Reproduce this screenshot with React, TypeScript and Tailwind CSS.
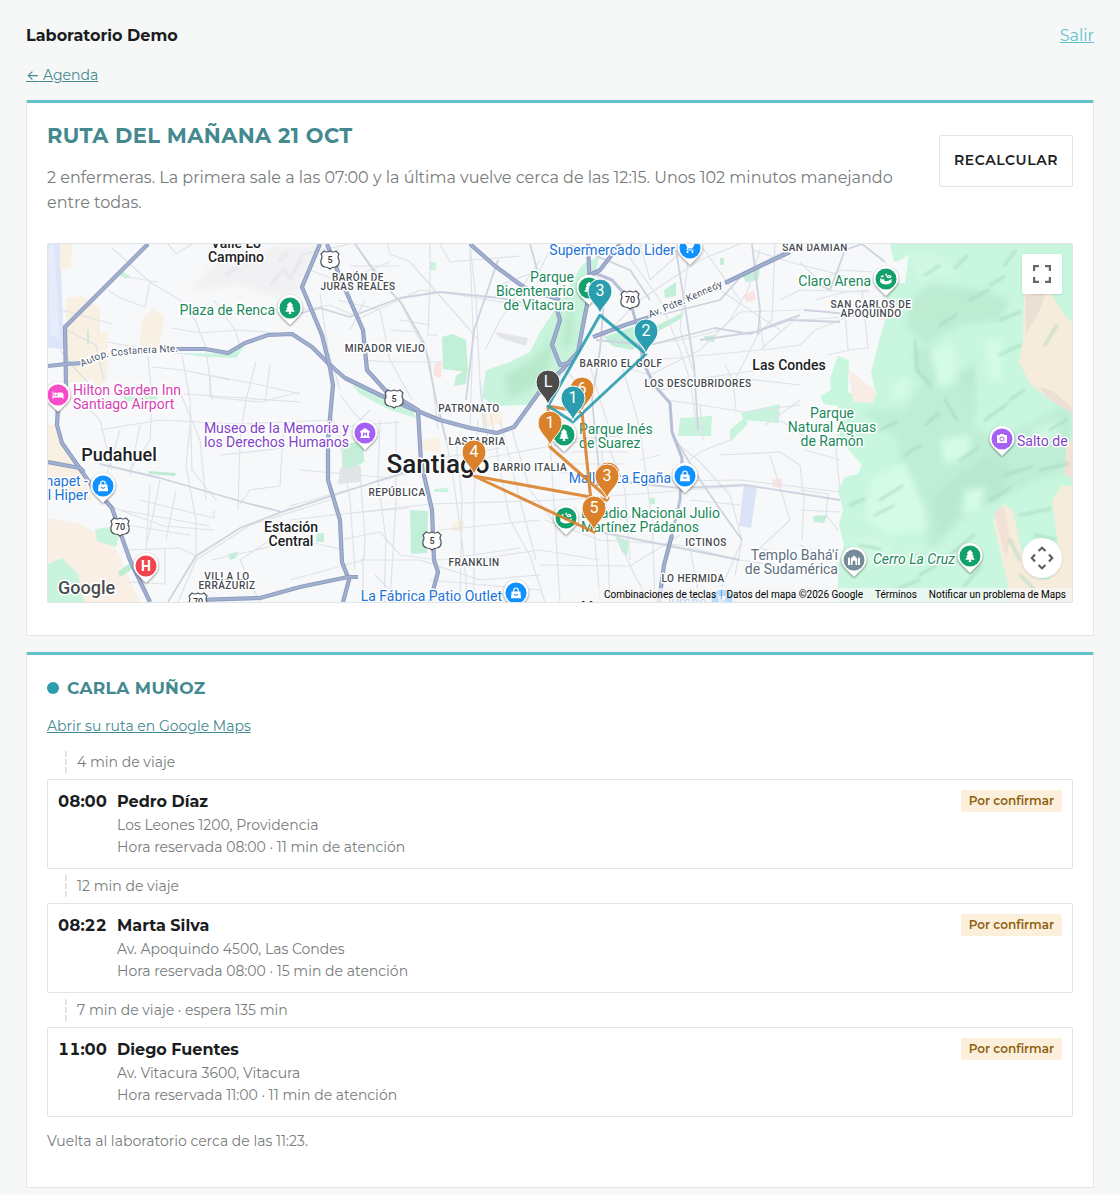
import type { IconType } from "react-icons";
import { FaTree } from "react-icons/fa";
import {
  MdHotel,
  MdMuseum,
  MdPhotoCamera,
  MdShoppingCart,
} from "react-icons/md";

const stops = [
  {
    travel: "4 min de viaje",
    time: "08:00",
    name: "Pedro Díaz",
    address: "Los Leones 1200, Providencia",
    detail: "Hora reservada 08:00 · 11 min de atención",
  },
  {
    travel: "12 min de viaje",
    time: "08:22",
    name: "Marta Silva",
    address: "Av. Apoquindo 4500, Las Condes",
    detail: "Hora reservada 08:00 · 15 min de atención",
  },
  {
    travel: "7 min de viaje · espera 135 min",
    time: "11:00",
    name: "Diego Fuentes",
    address: "Av. Vitacura 3600, Vitacura",
    detail: "Hora reservada 11:00 · 11 min de atención",
  },
];

const areas = [
  { fill: "#dde5f8", d: "M48 244H60L64 349L48 348Z" },
  { fill: "#e6ecfa", d: "M48 250L54 244L60 340L50 335Z" },
  { fill: "#f8f0e2", d: "M60 244H72L71 268L60 270ZM66 298L82 296L100 308V345L86 380L66 384ZM80 345L108 330L106 378L78 380Z" },
  { fill: "#f8f0e2", d: "M141 322L152 309L165 316L158 350L140 346ZM88 364L110 352L106 380L96 392Z" },
  { fill: "#f8f0e2", d: "M48 425H56L72 462L84 476L92 500L64 500L48 480Z" },
  { fill: "#f9efe4", d: "M48 518L80 524L98 534L118 552L134 590L140 602H70L48 560Z" },
  { fill: "#c8f3dc", d: "M48 564L62 558L78 574L84 602H48ZM95 529L110 527L120 532L116 547L97 541Z" },
  { fill: "#bdecd3", d: "M118 572L130 563L134 568L120 577ZM148 471L176 473L175 476L149 474Z" },
  { fill: "#c8f3dc", d: "M120 270L130 276L126 279L119 274ZM176 353L228 354L246 344L236 358L205 357ZM124 396L158 396L156 401H124Z" },
  { fill: "#c2efd7", d: "M442 337L452 334L466 340L468 372L443 369ZM456 376L468 368L466 384L454 386Z" },
  { fill: "#c2efd7", d: "M343 445L363 440L364 462L352 469L342 470ZM410 510L428 511L427 553L411 554ZM317 534L324 533V542H316Z" },
  { fill: "#c8f3dc", d: "M352 385L372 390L412 408L416 418L390 410L360 394ZM434 489L448 488V492H434ZM430 262L436 262V270H430Z" },
  { fill: "#c8f3dc", d: "M540 332L560 302L582 265L600 255L588 300L578 350L555 385L540 395L526 405L495 406L482 397L486 370L510 362L530 352Z" },
  { fill: "#c2efd7", d: "M604 337L632 327L652 328L684 312L682 318L650 336L632 350L612 346ZM664 290L676 282V296L665 298Z" },
  { fill: "#c2efd7", d: "M704 336L716 335L714 342L706 341ZM742 275L760 268L758 280L746 282ZM720 258H724V265H720Z" },
  { fill: "#c8f3dc", d: "M680 418L712 416L711 436H678ZM740 413L780 404L779 423L745 420ZM730 430L744 418L748 424L730 442Z" },
  { fill: "#c2efd7", d: "M615 536L629 541L627 556L622 552ZM650 498H655V504H650ZM813 516L827 515L824 523L814 522ZM228 554L238 552L236 558L230 560Z" },
  { fill: "#dbe3f7", d: "M744 485L757 487L751 528L739 526Z" },
  { fill: "#e2e4e8", d: "M495 332L528 338L526 346L500 338ZM340 468L361 466L360 482L338 484Z" },
  { fill: "#fbe3e1", d: "M744 295L754 290L756 300L746 302ZM772 480L782 478L782 488L773 487ZM434 364L442 361L441 378L434 376Z" },
  { fill: "#faf1e2", d: "M480 415L500 410L504 422L484 428ZM452 522L464 520V532H453ZM420 440L438 438L442 452L422 450Z" },
  { fill: "#c8f6de", d: "M890 244L894 262L901 260L909 254L905 283L887 284L885 320L878 345L871 372L876 396L868 403L848 392L849 360L838 356L830 378L831 390L820 396L824 404L838 406L840 440L862 465L858 474L845 477L838 490L843 510L839 525L844 545L838 565L838 602H1072V244Z" },
];

const softHills = [
  { fill: "#b8e9cc", d: "M505 375L530 362L545 348L556 330L548 372L530 390L508 398ZM565 320L574 300L572 345L562 350Z" },
  { fill: "#bdecd3", d: "M912 300L930 284L985 290L1010 300L1000 320L960 325L925 344L905 325Z" },
  { fill: "#bdecd3", d: "M912 350L935 345L945 365L935 385L918 378ZM950 392L975 360L976 415L955 430Z" },
  { fill: "#bfeed6", d: "M860 410L905 410L925 380L960 390L975 430L1000 440L1072 400V470L1040 478L1000 500L960 520L930 552L918 500L900 480L898 440Z" },
  { fill: "#b9ead1", d: "M930 500L950 480L990 452L1015 470L995 500L962 515L940 540ZM955 375L974 366L976 390Z" },
  { fill: "#d4fbe5", d: "M930 350L952 342L958 372L940 390ZM890 386L910 376L906 398L892 402ZM940 440L970 435L968 455L945 465Z" },
  { fill: "#d4fbe5", d: "M870 480L905 462L925 510L928 530L890 535L865 520ZM965 490L985 488L980 510L962 515ZM984 340L1002 338V380H990Z" },
  { fill: "#d0f8e2", d: "M850 540L880 535L900 560L865 570ZM905 250L940 256L960 275L920 280ZM1030 430L1060 420L1055 445Z" },
];

const hills = [
  { fill: "#f8ede5", d: "M849 370L876 391L873 403L853 402ZM885 290L886 320L878 320Z" },
  { fill: "#f5ecdc", d: "M1024 292L1052 294L1062 312L1072 322V413L1050 400L1030 384L1019 362L1023 340Z" },
  { fill: "#ecdfd3", d: "M1025 296L1046 292L1038 314L1026 333ZM1038 386L1054 392L1072 408V413L1050 400Z" },
  { fill: "#f5ecdc", d: "M1004 504L1013 510L1022 552L1036 578L1050 580L1058 545L1052 500L1062 486H1072V602H1012L1002 560L993 520Z" },
  { fill: "#f2e1d6", d: "M994 512L1004 506L1010 540L1006 560ZM1066 448L1072 440V478L1064 474Z" },
];

const hillShades =
  "M925 275l14-9M955 268l12-12M970 300l18-10M940 325l16-10M990 285l14-8M1005 265l10-14M880 500l22-14M875 515l18-9M905 455l16-10M925 425l14-12M985 420l22-16M1010 400l14-10M1000 355l20-10M960 460l18-12M1005 475l26-8M1040 470l28-6M990 500l20-12M950 555l24-20M920 575l20-12M895 590l24-10M965 585l16-18M1045 345l12-20M1010 540l10 20M1020 575l14 14M880 430l16-8M1020 515l30-6M1035 535l20 4M850 505l14-6M1000 320l20-8M915 340l2 30l14 16M860 545l20 4M945 400l12 20M1050 430l16-10";

const minorRoads = [
  "M112 248L150 282L180 300L196 322L206 348L212 400M150 282L145 307L120 298L108 290M120 276L158 282M168 244L176 254L192 244",
  "M62 310L112 324M66 330L96 345L104 380M108 342L160 352L190 354M148 356L152 400L150 440L130 470M182 355L190 400L192 470L216 500",
  "M172 328L200 333L240 330L292 334M152 367L182 370L256 384L300 394M256 362L246 400L240 440L238 510M192 372L230 380M184 394L300 402",
  "M180 392L200 440L206 500M100 430L160 420L240 424L330 420M210 375V397L260 402L300 392M270 365L265 402M214 300L235 330L240 346",
  "M48 395L80 400L100 420L112 470M120 430L105 480M140 425L130 475M190 425L186 466L196 520L196 560M160 480L148 540M176 490L166 540",
  "M114 508L164 526L214 530M120 510L210 526M124 550L180 548L196 556M126 525L190 535M140 500L214 518V510M150 485L146 550L165 548V584L128 582",
  "M240 504L250 490L280 486L284 420M220 455L285 448M212 560L300 540M178 602L196 560L250 525L330 500M260 602L240 560L300 520",
  "M300 255L350 244M310 270L340 282L390 262M355 244L375 270L400 302L430 360L438 430M388 244L390 254L410 262L470 330L478 340",
  "M302 310L330 305L360 318L420 290L440 292L550 310M320 294L328 350L340 390M338 300L380 310L390 360L412 400M430 244V280L428 335H438M470 250L473 330L470 430",
  "M350 266H400M365 300L350 330M400 320L430 325M390 330L420 332M365 360L390 362H440M340 395L360 420L370 410M470 244L476 300L480 385L484 430",
  "M485 350L500 320L540 260M480 380L488 440M440 244L450 262L520 256M550 250L540 270L500 285",
  "M300 430L400 422M330 415L345 440L360 470L365 540L364 560M338 430L350 500L355 570M300 470L390 478L430 460L500 448",
  "M290 506L340 492L420 470L540 448L600 438M290 520L430 504L560 500L740 486M330 515L410 508M340 540L380 532L400 555L440 560",
  "M380 420L378 480L386 540L384 602M396 420V500L390 602M440 410L452 470L462 540L468 602M456 440L462 500L460 602M478 420L474 500V602",
  "M490 410L500 470L510 520L530 556L545 602M500 420L520 500L536 560M512 430L530 490L560 530M470 560L540 550L600 560M440 530L540 520",
  "M360 560H420L480 580L540 575M290 580L364 560M363 555V602M375 575L390 590M300 540L345 550M430 580L540 590M440 560L520 548",
  "M545 470L580 475L610 482L740 480L840 492M545 520L600 540L680 545L740 560L840 575M540 565L630 566L680 535M550 440L560 602",
  "M580 430L590 480L600 602M600 430L606 500L610 602M560 440L620 436M570 452H628M566 464H624M610 450L625 490L630 560M640 430L652 520L655 602",
  "M615 532L635 576L650 602M690 548L700 602M673 440L700 462L730 495L742 540L735 575M730 440L700 452L690 460M720 455L780 452L800 465L804 500L802 540",
  "M770 455L790 520L760 548L800 560M742 540L727 575L715 602M840 420L836 450L840 490M805 450L840 460M800 490L828 494L826 515L838 530",
  "M620 244L660 300L680 350L690 380L698 435M640 244L650 280L690 244M600 340L640 300L700 260L740 244M690 244L680 330L693 370M700 244L740 300",
  "M600 360L650 375L700 350L730 320L748 290L760 250M648 345L690 338L720 330L740 312L800 310M655 360L760 350L800 315M660 390L740 378L800 385",
  "M668 400L745 412L800 405M700 405L703 440M725 365L733 380L736 410M735 380L758 334L772 320L775 244M690 380L760 370M760 320L764 350L800 345",
  "M800 262L820 282L840 270L872 272M815 300L845 292L870 290M845 310L848 350L868 348L862 290M800 320L860 316M828 355L850 350M800 345L815 330L845 318",
  "M780 300L800 290L868 292M620 360L635 410L640 430M590 365L600 400L610 430M560 365L575 380M680 300L720 290L780 330M752 250L790 262L860 280",
  "M800 510L840 512M765 425L800 400M780 420L810 440M800 545L830 560M690 500L740 505M620 520L650 510L670 512M640 460L660 455",
];

const secondaryRoads = [
  "M290 316L320 308L350 317L400 298L440 292L500 298L560 310",
  "M355 244L380 280L402 304L425 345L436 400L446 440",
  "M100 464L160 478L250 504L282 512L350 490L430 464",
  "M168 602L196 556L240 528L292 508",
  "M640 320L720 300L745 272L800 244M700 340L755 332L780 322L800 315",
  "M676 250L684 300L694 365L698 430M604 300L600 350L592 400L600 480",
  "M596 340L650 345L715 328L750 334L790 320L840 322M673 435L700 480L722 512L742 540",
  "M752 244L760 310L758 335M600 480L680 488L745 485L840 500M600 532L680 548L740 560",
  "M498 260L474 330L466 400M530 244L540 280M570 245L630 270L650 300",
  "M804 310L828 312L860 316M800 275L830 290L845 250L862 244L885 262",
];

const highways = [
  "M148 244L65 327L66 385L58 405L57 425L62 443L76 463L92 486L112 508L120 532L130 560L150 602",
  "M48 366L66 364L84 363M173 349L205 349L228 353L245 343L268 335L292 334L312 347L330 365L345 378L380 395L410 408L440 420L470 428L497 433L514 427L530 405L543 387L562 370L578 352L584 320L590 290L588 244",
  "M320 244L302 287L322 335L330 368L333 385L328 440L328 480L340 520L342 562L349 580L343 602",
  "M327 244L342 282L363 330L367 370L385 390L418 410L421 462L432 510L434 560L438 572L430 602",
  "M470 244L495 266L525 288L560 300",
  "M195 600L260 598L300 587L348 577L358 577",
  "M48 462L80 468L84 472",
  "M593 337L625 325L650 317M725 283L760 266L790 252",
  "M555 302L560 320L552 345L560 365L572 362M620 244L600 270L588 276",
  "M672 535L664 565L659 602",
];

const ringRoad = "M592 272L612 280L630 300L638 330L643 362L654 385L670 403L672 432L682 458L680 500L672 535";

// x, y is the start of the first line's baseline
type MapLabel = {
  x: number;
  y: number;
  lines: string[];
  className: string;
  anchor?: "start" | "middle" | "end";
  step?: number;
};

const park = "fill-[#1a8a5c] text-[14px]";
const shop = "fill-[#2273d8] text-[14px]";
const district = "fill-[#454a50] text-[10px] font-medium tracking-wider";
const town = "fill-[#202124] text-[14px] font-medium";

const labels: MapLabel[] = [
  { x: 236, y: 248, lines: ["Valle Lo", "Campino"], className: town, anchor: "middle" },
  { x: 789, y: 370, lines: ["Las Condes"], className: town, anchor: "middle" },
  { x: 291, y: 532, lines: ["Estación", "Central"], className: town, anchor: "middle" },
  { x: 119, y: 461, lines: ["Pudahuel"], className: "fill-[#202124] text-[18px] font-medium", anchor: "middle" },
  { x: 438, y: 473, lines: ["Santiago"], className: "fill-[#202124] text-[26px] font-medium", anchor: "middle" },
  { x: 587, y: 612, lines: ["M"], className: "fill-[#202124] text-[14px] font-medium", anchor: "middle" },
  { x: 358, y: 281, lines: ["BARÓN DE", "JURAS REALES"], className: district, anchor: "middle", step: 9 },
  { x: 385, y: 352, lines: ["MIRADOR VIEJO"], className: district, anchor: "middle" },
  { x: 469, y: 412, lines: ["PATRONATO"], className: district, anchor: "middle" },
  { x: 477, y: 445, lines: ["LASTARRIA"], className: district, anchor: "middle" },
  { x: 530, y: 471, lines: ["BARRIO ITALIA"], className: district, anchor: "middle" },
  { x: 397, y: 496, lines: ["REPÚBLICA"], className: district, anchor: "middle" },
  { x: 474, y: 566, lines: ["FRANKLIN"], className: district, anchor: "middle" },
  { x: 227, y: 580, lines: ["VILLA LO", "ERRÁZURIZ"], className: district, anchor: "middle", step: 9 },
  { x: 621, y: 367, lines: ["BARRIO EL GOLF"], className: district, anchor: "middle" },
  { x: 698, y: 387, lines: ["LOS DESCUBRIDORES"], className: district, anchor: "middle" },
  { x: 815, y: 251, lines: ["SAN DAMIAN"], className: district, anchor: "middle" },
  { x: 871, y: 308, lines: ["SAN CARLOS DE", "APOQUINDO"], className: district, anchor: "middle", step: 9 },
  { x: 706, y: 546, lines: ["ICTINOS"], className: district, anchor: "middle" },
  { x: 693, y: 582, lines: ["LO HERMIDA"], className: district, anchor: "middle" },
  { x: 275, y: 315, lines: ["Plaza de Renca"], className: park, anchor: "end" },
  { x: 574, y: 282, lines: ["Parque", "Bicentenario", "de Vitacura"], className: park, anchor: "end" },
  { x: 871, y: 286, lines: ["Claro Arena"], className: park, anchor: "end" },
  { x: 832, y: 418, lines: ["Parque", "Natural Aguas", "de Ramón"], className: park, anchor: "middle" },
  { x: 579, y: 434, lines: ["Parque Inés", "de Suarez"], className: park },
  { x: 581, y: 518, lines: ["Estadio Nacional Julio", "Martínez Prádanos"], className: park },
  { x: 955, y: 564, lines: ["Cerro La Cruz"], className: "fill-[#1a8a5c] text-[14px] italic", anchor: "end" },
  { x: 675, y: 255, lines: ["Supermercado Lider"], className: shop, anchor: "end" },
  { x: 671, y: 483, lines: ["Mallplaza Egaña"], className: shop, anchor: "end" },
  { x: 502, y: 601, lines: ["La Fábrica Patio Outlet"], className: shop, anchor: "end" },
  { x: 707, y: 607, lines: ["Jumbo"], className: shop, anchor: "end" },
  { x: 88, y: 486, lines: ["Unapet -", "Mall Hiper"], className: shop, anchor: "end" },
  { x: 73, y: 395, lines: ["Hilton Garden Inn", "Santiago Airport"], className: "fill-[#d63fb4] text-[14px]" },
  { x: 349, y: 433, lines: ["Museo de la Memoria y", "los Derechos Humanos"], className: "fill-[#8243c9] text-[14px]", anchor: "end" },
  { x: 1017, y: 446, lines: ["Salto de"], className: "fill-[#8243c9] text-[14px]" },
  { x: 838, y: 560, lines: ["Templo Bahá'í", "de Sudamérica"], className: "fill-[#5c7080] text-[14px]", anchor: "end" },
];

type GlyphProps = { x?: number; y?: number; size?: number; color?: string };

function BagIcon({ x, y, size, color }: GlyphProps) {
  return (
    <svg x={x} y={y} width={size} height={size} viewBox="0 0 12 12" fill="none">
      <path d="M1.6 4.6h8.8l.6 6.6H1Z" fill={color} />
      <path d="M3.8 5V3.2a2.2 2.2 0 0 1 4.4 0V5" stroke={color} strokeWidth="1.2" />
      <path d="M4.2 7.2q1.8 2.2 3.6 0" stroke="#0f91ff" strokeWidth="1.1" />
    </svg>
  );
}

function StadiumIcon({ x, y, size, color }: GlyphProps) {
  return (
    <svg x={x} y={y} width={size} height={size} viewBox="0 0 12 12" fill={color}>
      <path d="M0 5.2q2 1.4 4.6 1.4V8.2q3.4.4 7-2.2v3.6q-2.6 1.9-5.8 1.9T.4 9.6Z" />
      <path d="M.8 3.2L3.4 1.8V4.6L.8 4ZM5.4 1L7 .6V2.4L5.4 2.8Z" />
      <ellipse cx="9" cy="3.6" rx="2.6" ry="1.7" />
      <circle cx="9" cy="3.6" r=".7" fill="#12a06c" />
    </svg>
  );
}

function TempleIcon({ x, y, size, color }: GlyphProps) {
  return (
    <svg x={x} y={y} width={size} height={size} viewBox="0 0 12 12" fill={color}>
      <path d="M0 4.4L1 3L2 4.4V11H0ZM10 4.4L11 3L12 4.4V11H10ZM2.8 11V5.4Q3.2 3.4 6 1.4Q8.8 3.4 9.2 5.4V11H7.4V8a1.4 1.4 0 0 0-2.8 0V11Z" />
    </svg>
  );
}

type Glyph = IconType | typeof BagIcon;

const places: { x: number; y: number; color: string; icon: Glyph | null }[] = [
  { x: 290, y: 308, color: "#12a06c", icon: FaTree },
  { x: 589, y: 288, color: "#12a06c", icon: FaTree },
  { x: 564, y: 435, color: "#12a06c", icon: FaTree },
  { x: 970, y: 556, color: "#12a06c", icon: FaTree },
  { x: 886, y: 279, color: "#12a06c", icon: StadiumIcon },
  { x: 566, y: 518, color: "#12a06c", icon: StadiumIcon },
  { x: 690, y: 248, color: "#0f91ff", icon: MdShoppingCart },
  { x: 685, y: 476, color: "#0f91ff", icon: BagIcon },
  { x: 516, y: 593, color: "#0f91ff", icon: BagIcon },
  { x: 103, y: 486, color: "#0f91ff", icon: BagIcon },
  { x: 722, y: 600, color: "#0f91ff", icon: MdShoppingCart },
  { x: 58, y: 395, color: "#f84bc8", icon: MdHotel },
  { x: 365, y: 433, color: "#a561f5", icon: MdMuseum },
  { x: 1002, y: 439, color: "#a561f5", icon: MdPhotoCamera },
  { x: 854, y: 560, color: "#768b99", icon: TempleIcon },
  { x: 146, y: 566, color: "#f0424f", icon: null },
];

const shields = [
  { x: 330, y: 260, text: "5" },
  { x: 394, y: 399, text: "5" },
  { x: 432, y: 541, text: "5" },
  { x: 630, y: 300, text: "70" },
  { x: 120, y: 527, text: "70" },
  { x: 198, y: 602, text: "70" },
];

// x, y is the tip of the pin
const pins = [
  { x: 548, y: 405, text: "L", color: "#4c4c4c" },
  { x: 582, y: 412, text: "6", color: "#d9822b" },
  { x: 608, y: 497, text: "2", color: "#d9822b" },
  { x: 600, y: 314, text: "3", color: "#2a9daf" },
  { x: 646, y: 354, text: "2", color: "#2a9daf" },
  { x: 573, y: 421, text: "1", color: "#2a9daf" },
  { x: 550, y: 446, text: "1", color: "#d9822b" },
  { x: 474, y: 475, text: "4", color: "#d9822b" },
  { x: 607, y: 499, text: "3", color: "#d9822b" },
  { x: 594, y: 531, text: "5", color: "#d9822b" },
];

function Place({ x, y, color, icon: Icon }: (typeof places)[number]) {
  return (
    <g>
      <path
        d={`M${x} ${y + 17}L${x - 9} ${y + 8}A12.5 12.5 0 1 1 ${x + 9} ${y + 8}Z`}
        fill="#fff"
        className="drop-shadow-[0_1px_1px_rgba(0,0,0,0.45)]"
      />
      <circle cx={x} cy={y} r="10.5" fill={color} />
      {Icon ? (
        <Icon x={x - 6} y={y - 6} size={12} color="#fff" />
      ) : (
        <text x={x} y={y + 5} textAnchor="middle" fill="#fff" className="text-[14px] font-bold">
          H
        </text>
      )}
    </g>
  );
}

function Pin({ x, y, text, color }: (typeof pins)[number]) {
  return (
    <g>
      <path
        d={`M${x} ${y}C${x - 2} ${y - 9} ${x - 12} ${y - 13} ${x - 12} ${y - 23}A12 12 0 0 1 ${x + 12} ${y - 23}C${x + 12} ${y - 13} ${x + 2} ${y - 9} ${x} ${y}Z`}
        fill={color}
        stroke="#fff"
        strokeWidth="1"
      />
      <text x={x} y={y - 18} textAnchor="middle" fill="#fff" className="text-[16px]">
        {text}
      </text>
    </g>
  );
}

function Shield({ x, y, text }: (typeof shields)[number]) {
  return (
    <g>
      <path
        d={`M${x - 6} ${y - 9}q3 2 6 0q3 2 6 0l3 3q-2 3 0 6q1 6-4 7q-3 0-5 2q-2-2-5-2q-5-1-4-7q2-3 0-6Z`}
        fill="#fff"
        stroke="#50555b"
        strokeWidth="1.2"
      />
      <text x={x} y={y + 3} textAnchor="middle" fill="#33373c" className="text-[9px] font-medium">
        {text}
      </text>
    </g>
  );
}

function MapDrawing() {
  return (
    <svg
      viewBox="48 244 1024 358"
      preserveAspectRatio="xMidYMid slice"
      className="block h-full w-full font-[Roboto,sans-serif]"
      role="img"
      aria-label="Mapa de la ruta"
    >
      <defs>
        <filter id="relief">
          <feGaussianBlur stdDeviation="3" />
        </filter>
        <filter id="shade">
          <feGaussianBlur stdDeviation="1" />
        </filter>
      </defs>
      <rect x="48" y="244" width="1024" height="358" fill="#f7f8f9" />
      <path d="M190 290L215 262L250 256L280 244H320L300 290L285 300L240 285Z" fill="#f1f1f3" filter="url(#relief)" />
      <path d="M270 285l14-16l6 10l12-22M278 262l10-10M225 275l14-8" stroke="#e6e7ea" strokeWidth="3" fill="none" filter="url(#shade)" />
      {areas.map((a) => (
        <path key={a.d} d={a.d} fill={a.fill} />
      ))}
      <g filter="url(#relief)">
        {softHills.map((h) => (
          <path key={h.d} d={h.d} fill={h.fill} />
        ))}
      </g>
      {hills.map((h) => (
        <path key={h.d} d={h.d} fill={h.fill} />
      ))}
      <path
        d={hillShades}
        stroke="#9fd4b8"
        strokeOpacity="0.5"
        strokeWidth="3"
        strokeLinecap="round"
        fill="none"
        filter="url(#shade)"
      />

      <g fill="none" strokeLinejoin="round">
        {minorRoads.map((d) => (
          <path key={d} d={d} stroke="#dfe2e8" strokeWidth="1.2" />
        ))}
        {secondaryRoads.map((d) => (
          <path key={d} d={d} stroke="#cdd3df" strokeWidth="1.8" />
        ))}
        <path d="M88 330V344M60 350L78 372L100 394" stroke="#b8dfdb" strokeWidth="1" />
        <path d={ringRoad} stroke="#b6c0d6" strokeWidth="3" />
        {highways.map((d) => (
          <g key={d}>
            <path d={d} stroke="#8a99bd" strokeWidth="4.2" />
            <path d={d} stroke="#a2b0d0" strokeWidth="2.4" />
          </g>
        ))}
        <path id="costanera" d="M82 367L102 358L130 354L190 351" />
        <path id="kennedy" d="M650 318L688 302L730 283" />
      </g>

      <g stroke="#fff" strokeWidth="3" strokeLinejoin="round" paintOrder="stroke">
        <text className="fill-[#454f68] text-[10px]">
          <textPath href="#costanera">Autop. Costanera Nte.</textPath>
        </text>
        <text className="fill-[#454f68] text-[10px]">
          <textPath href="#kennedy">Av. Pdte. Kennedy</textPath>
        </text>
        {labels.map((l) => (
          <text key={l.lines[0] + l.y} y={l.y} textAnchor={l.anchor ?? "start"} className={l.className}>
            {l.lines.map((line, i) => (
              <tspan key={line} x={l.x} y={l.y + i * (l.step ?? 14)}>
                {line}
              </tspan>
            ))}
          </text>
        ))}
      </g>

      {shields.map((s) => (
        <Shield key={`${s.x}-${s.y}`} {...s} />
      ))}
      {places.map((p) => (
        <Place key={`${p.x}-${p.y}`} {...p} />
      ))}

      <g fill="none" strokeWidth="3" strokeLinejoin="round" strokeOpacity="0.9">
        <path d="M548 406L550 447L608 498L607 500L474 476L594 532L582 412L548 406" stroke="#d9822b" />
        <path d="M548 406L600 315L646 354L573 422Z" stroke="#2a9daf" />
      </g>
      {pins.map((p) => (
        <Pin key={`${p.x}-${p.y}`} {...p} />
      ))}
    </svg>
  );
}

function RouteMap() {
  return (
    <div className="relative mt-7 h-[360px] overflow-hidden rounded-xs border border-[#e2e5e6] font-[Roboto,sans-serif]">
      <MapDrawing />
      <span className="absolute bottom-0.5 left-2.5 text-[18px] leading-6 font-medium text-[#4a4d51] [paint-order:stroke] [-webkit-text-stroke:3px_#fff]">
        Google
      </span>
      <button
        aria-label="Pantalla completa"
        className="absolute top-2.5 right-2.5 flex size-10 items-center justify-center rounded-xs bg-white shadow"
      >
        <svg viewBox="0 0 18 18" className="size-[18px]" fill="none" stroke="#666" strokeWidth="2.2">
          <path d="M1.1 6V1.1H6M12 1.1H16.9V6M16.9 12V16.9H12M6 16.9H1.1V12" />
        </svg>
      </button>
      <button
        aria-label="Controles de cámara"
        className="absolute right-2.5 bottom-6 flex size-10 items-center justify-center rounded-full bg-white shadow"
      >
        <svg viewBox="0 0 24 24" className="size-6" fill="none" stroke="#5f5f5f" strokeWidth="2.2">
          <path d="M8.5 5L12 1.8L15.5 5M8.5 19L12 22.2L15.5 19M5 8.5L1.8 12L5 15.5M19 8.5L22.2 12L19 15.5" />
        </svg>
      </button>
      <div className="absolute right-0 bottom-0 flex gap-3 bg-[#f5f5f5]/75 px-1.5 text-[10px] leading-[14px] text-black">
        <div className="flex gap-1">
          <button>Combinaciones de teclas</button>
          <span className="text-[#2a8fdf]">|</span>
          <span>Datos del mapa ©2026 Google</span>
        </div>
        <a href="#terminos">Términos</a>
        <a href="#notificar">Notificar un problema de Maps</a>
      </div>
    </div>
  );
}

function Stop({ stop }: { stop: (typeof stops)[number] }) {
  return (
    <li>
      <p className="my-1.5 ml-[18px] border-l-2 border-dashed border-[#e2e5e6] pl-2.5 text-[14px] leading-[22px] text-[#777c7c]">
        {stop.travel}
      </p>
      <div className="flex items-start rounded-xs border border-[#e2e5e6] p-2.5">
        <span className="w-[59px] shrink-0 text-[16px] leading-6 font-bold text-[#1a1c1d] tabular-nums">
          {stop.time}
        </span>
        <div className="min-w-0 flex-1 text-[14px] leading-[22px] text-[#777c7c]">
          <h3 className="text-[16px] leading-6 font-bold text-[#1a1c1d]">{stop.name}</h3>
          <p>{stop.address}</p>
          <p>{stop.detail}</p>
        </div>
        <span className="rounded-xs bg-[#fcf0dc] px-2 text-[12px] leading-[22px] font-semibold text-[#8f6210]">
          Por confirmar
        </span>
      </div>
    </li>
  );
}

export default function App() {
  return (
    <div className="min-h-screen bg-[#f6f8f8] px-[26px] pt-6 pb-[7px] font-[Montserrat,Inter,sans-serif]">
      <header className="flex items-center justify-between text-[16px] leading-6">
        <span className="font-bold text-[#1a1c1d]">Laboratorio Demo</span>
        <a href="#salir" className="text-[#62bfcb] underline">
          Salir
        </a>
      </header>
      <nav className="mt-4 flex text-[14px] leading-[22px]">
        <a href="#agenda" className="text-[#43898f] underline">
          <span className="font-[Inter,sans-serif]">←</span> Agenda
        </a>
      </nav>

      <main>
        <section className="mt-3.5 rounded-xs border border-t-3 border-[#e2e5e6] border-t-[#62bfcb] bg-white px-5 pt-5 pb-8">
          <div className="flex items-start justify-between gap-7">
            <div>
              <h1 className="text-[21px] leading-[26px] font-bold tracking-[0.02em] text-[#43898f]">
                RUTA DEL MAÑANA 21 OCT
              </h1>
              <p className="mt-4 text-[16px] leading-[25px] text-[#777c7c]">
                2 enfermeras. La primera sale a las 07:00 y la última vuelve cerca de las 12:15. Unos 102 minutos
                manejando entre todas.
              </p>
            </div>
            <button className="mt-3 shrink-0 rounded-xs border border-[#e2e5e6] bg-white px-3.5 pt-[13px] pb-[15px] text-[14px] leading-[22px] font-semibold tracking-[0.04em] text-[#1a1c1d]">
              RECALCULAR
            </button>
          </div>
          <RouteMap />
        </section>

        <section className="mt-4 rounded-xs border border-t-3 border-[#e2e5e6] border-t-[#62bfcb] bg-white px-5 pt-5 pb-[35px]">
          <h2 className="flex items-center gap-2 text-[17px] leading-[26px] font-bold tracking-[0.02em] text-[#43898f]">
            <span className="size-3 rounded-full bg-[#2a9daf]" />
            CARLA MUÑOZ
          </h2>
          <p className="mt-3.5 text-[14px] leading-[22px]">
            <a href="#maps" className="text-[#43898f] underline">
              Abrir su ruta en Google Maps
            </a>
          </p>
          <ol className="mt-3.5">
            {stops.map((s) => (
              <Stop key={s.time} stop={s} />
            ))}
          </ol>
          <p className="mt-[13px] text-[14px] leading-[22px] text-[#777c7c]">
            Vuelta al laboratorio cerca de las 11:23.
          </p>
        </section>
      </main>
    </div>
  );
}
